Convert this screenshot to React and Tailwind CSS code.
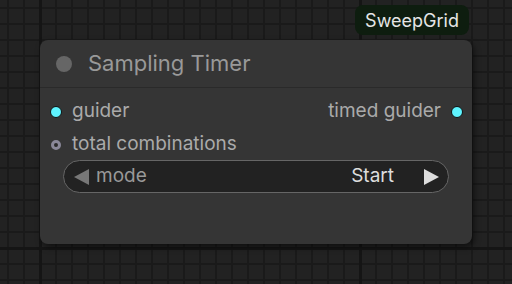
export default function App() {
  return (
    <div
      className="relative w-[512px] h-[284px] overflow-hidden bg-[#222222]"
      style={{ fontFamily: "Inter, 'Noto Sans', sans-serif" }}
    >
      <div className="absolute inset-0 bg-[linear-gradient(to_right,#1a1a1a_2px,transparent_2px),linear-gradient(to_bottom,#1a1a1a_2px,transparent_2px)] bg-[size:16px_16px] bg-[position:7px_7px]" />
      <div className="absolute inset-0 bg-[linear-gradient(to_right,#151515_3px,transparent_3px),linear-gradient(to_bottom,#151515_3px,transparent_3px)] bg-[size:320px_320px] bg-[position:39px_247px]" />

      {/* badge */}
      <div className="absolute left-[355px] top-[5px] h-[30px] w-[114px] rounded-[8px] bg-[#0e1d0f] flex items-center justify-center text-[#e6e6e6] text-[18px]">
        SweepGrid
      </div>

      {/* node */}
      <div className="absolute left-[40px] top-[40px] w-[432px] h-[204px] rounded-[8px] bg-[#353535] shadow-[2px_3px_6px_rgba(0,0,0,0.55)] flex flex-col">
        <div className="h-[48px] flex items-center pl-[16px] border-b border-[#2a2a2a]">
          <div className="w-[16px] h-[16px] rounded-full bg-[#666666]" />
          <span className="ml-[16px] text-[22px] text-[#999999]">Sampling Timer</span>
        </div>
        <div className="flex flex-col pt-[7px]">
          <div className="h-[33px] flex items-center justify-between pl-[10px] pr-[9px]">
            <div className="flex items-center">
              <div className="w-[12px] h-[12px] rounded-full bg-[#5ef4ff] border border-[#111]" />
              <span className="ml-[10px] text-[19px] text-[#aaaaaa]">guider</span>
            </div>
            <div className="flex items-center">
              <span className="mr-[10px] text-[19px] text-[#aaaaaa]">timed guider</span>
              <div className="w-[12px] h-[12px] rounded-full bg-[#5ef4ff] border border-[#111]" />
            </div>
          </div>
          <div className="h-[33px] flex items-center pl-[11px]">
            <div className="w-[10px] h-[10px] rounded-full border-[3px] border-[#8a8899] bg-[#2a2a2a]" />
            <span className="ml-[11px] text-[19px] text-[#aaaaaa]">total combinations</span>
          </div>
          <div className="px-[23px] -mt-[1px]">
            <div className="h-[33px] rounded-full bg-[#222222] border border-[#666666] flex items-center pl-[10px] pr-[9px] text-[19px]">
              <svg width="16" height="16" viewBox="0 0 16 16">
                <polygon points="0,8 15,0 15,16" fill="#777777" />
              </svg>
              <span className="ml-[6px] text-[#999999]">mode</span>
              <span className="ml-auto text-[#dddddd]">Start</span>
              <svg className="ml-[29px]" width="16" height="16" viewBox="0 0 16 16">
                <polygon points="1,0 16,8 1,16" fill="#dddddd" />
              </svg>
            </div>
          </div>
        </div>
      </div>
    </div>
  );
}
